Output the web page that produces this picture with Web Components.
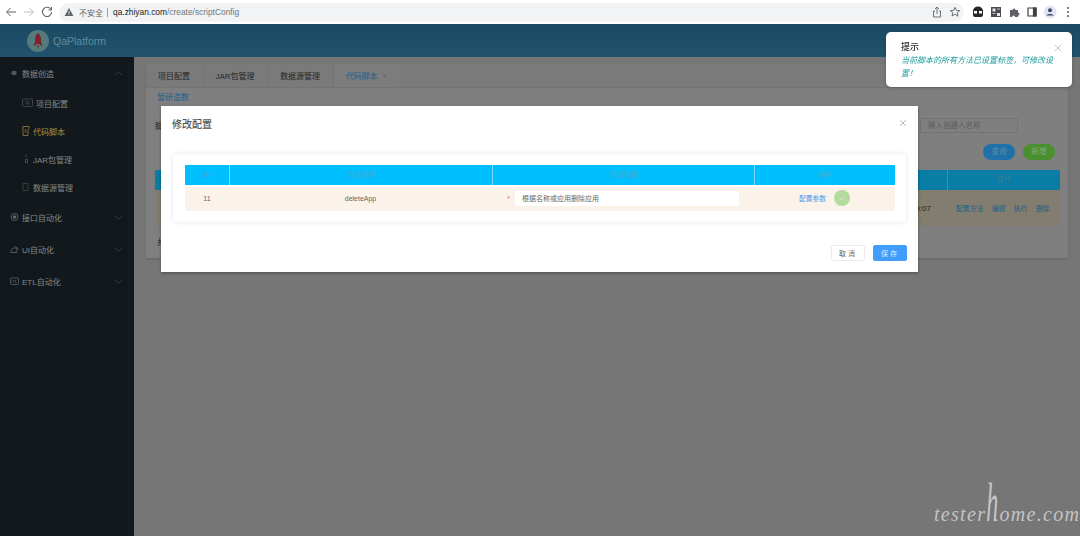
<!DOCTYPE html>
<html lang="zh">
<head>
<meta charset="utf-8">
<title>QaPlatform</title>
<style>
    html, body { margin: 0; height: 100%; }
    body {
        width: 1080px;
        height: 536px;
        position: relative;
        overflow: hidden;
        font-family: "Liberation Sans", "Noto Sans CJK SC", sans-serif;
        background: #777;
        filter: blur(.35px);
    }
    .app {
        display: grid;
        grid-template-columns: 134px 1fr;
        grid-template-rows: 33px 1fr;
        height: 512px;
    }
    app-header { grid-column: 1 / 3; }
</style>
</head>
<body>
<browser-bar></browser-bar>
<div class="app">
    <app-header></app-header>
    <side-menu>
        <menu-group label="数据创造" icon="dot" open></menu-group>
        <menu-item label="项目配置" icon="box" wide></menu-item>
        <menu-item label="代码脚本" icon="file" active></menu-item>
        <menu-item label="JAR包管理" icon="jar"></menu-item>
        <menu-item label="数据源管理" icon="db"></menu-item>
        <menu-group label="接口自动化" icon="api"></menu-group>
        <menu-group label="UI自动化" icon="ui"></menu-group>
        <menu-group label="ETL自动化" icon="etl"></menu-group>
    </side-menu>
    <main-panel></main-panel>
</div>
<config-modal></config-modal>
<toast-note title="提示">当前脚本的所有方法已设置标签，可修改设置！</toast-note>
<water-mark></water-mark>

<script>
const FONT = '"Liberation Sans", "Noto Sans CJK SC", sans-serif';

class BrowserBar extends HTMLElement {
    constructor() {
        super();
        this.shadowDOM = this.attachShadow({mode: "open"});
    }
    connectedCallback() {
        this.shadowDOM.innerHTML = `
        <style>
            :host { display: flex; align-items: center; height: 24px; background: #fff; font-family: ${FONT}; box-sizing: border-box; padding-left: 4px; }
            svg { display: block; flex: none; }
            .nav { display: flex; gap: 4px; }
            .nav svg { width: 14px; height: 14px; }
            .pill { margin-left: 5px; width: 905px; height: 19px; background: #f1f3f4; border-radius: 10px; display: flex; align-items: center; box-sizing: border-box; padding: 0 3px 0 5px; font-size: 8px; color: #5f6368; }
            .warn { margin-right: 5px; }
            .sep { width: 1px; height: 9px; background: #9aa0a6; margin: 0 5px 0 4px; }
            .url { font-size: 8.400px; color: #70757a; }
            .url b { font-weight: 400; color: #202124; }
            .end { margin-left: auto; display: flex; gap: 6px; }
            .ext { margin-left: 7px; display: flex; gap: 4px; align-items: center; }
            .ext svg { width: 14px; height: 14px; }
        </style>
        <div class="nav">
            <svg viewBox="0 0 14 14" fill="none" stroke="#5f6368" stroke-width="1"><path d="M12 7H3M6.500 3L2.500 7l4 4"/></svg>
            <svg viewBox="0 0 14 14" fill="none" stroke="#bdc1c6" stroke-width="1"><path d="M2 7h9M7.500 3l4 4-4 4"/></svg>
            <svg viewBox="0 0 14 14" fill="none" stroke="#5f6368" stroke-width="1.100"><path d="M11 4.600A4.600 4.600 0 1 0 11.600 7"/><path d="M11.400 2v3H8.400" /></svg>
        </div>
        <div class="pill">
            <svg class="warn" width="10" height="10" viewBox="0 0 10 10"><path d="M5 1l4.400 8H.6z" fill="#5f6368"/><path d="M5 4v2.400M5 7.200v.8" stroke="#fff" stroke-width=".8"/></svg>
            <span>不安全</span><span class="sep"></span>
            <span class="url"><b>qa.zhiyan.com</b>/create/scriptConfig</span>
            <span class="end">
                <svg width="12" height="12" viewBox="0 0 12 12" fill="none" stroke="#5f6368" stroke-width=".9"><path d="M4 5H2.500v6h7V5H8M6 8V1.200M4 3l2-2 2 2"/></svg>
                <svg width="12" height="12" viewBox="0 0 12 12" fill="none" stroke="#5f6368" stroke-width=".9"><path d="M6 1.300l1.400 3.100 3.300.3-2.500 2.200.8 3.300L6 8.200l-3 1.800.8-3.300L1.300 4.700l3.300-.3z"/></svg>
            </span>
        </div>
        <div class="ext">
            <svg viewBox="0 0 14 14"><path d="M2 6a5 4.500 0 0 1 10 0v4a2 2 0 0 1-2 2H4a2 2 0 0 1-2-2z" fill="#26282b"/><path d="M3 6h3v2.500H3zM8 6h3v2.500H8z" fill="#fff"/></svg>
            <svg viewBox="0 0 14 14"><path d="M2 2h10v10H2z" fill="#4a4d50"/><path d="M3.500 3.500h3v3h-3zM8 8h3v3H8z" fill="#e8e8e8"/><path d="M3.500 8h3v1h-3zM8 3.500h3v1H8z" fill="#bbb"/></svg>
            <svg viewBox="0 0 14 14"><path d="M3 5h2.500a1.500 1.500 0 0 1 3 0H11v2.400a1.500 1.500 0 0 1 0 3V12H8a1.500 1.500 0 0 0-3 0H3z" fill="#5f6368"/></svg>
            <svg viewBox="0 0 14 14" fill="none" stroke="#3c4043" stroke-width="1.200"><path d="M3 3h8v8H3z"/><path d="M8.500 3h2.500v8H8.500z" fill="#3c4043"/></svg>
            <svg viewBox="0 0 14 14"><circle cx="7" cy="7" r="6.500" fill="#e3e5f3"/><circle cx="7" cy="5.300" r="2" fill="#3c4a66"/><path d="M3.200 10.500c.6-2 6.900-2 7.600 0z" fill="#3c4a66"/></svg>
            <svg viewBox="0 0 14 14" fill="#5f6368"><circle cx="7" cy="3" r="1.100"/><circle cx="7" cy="7" r="1.100"/><circle cx="7" cy="11" r="1.100"/></svg>
        </div>`;
    }
}

class AppHeader extends HTMLElement {
    constructor() {
        super();
        this.shadowDOM = this.attachShadow({mode: "open"});
    }
    connectedCallback() {
        this.shadowDOM.innerHTML = `
        <style>
            :host { display: flex; align-items: center; gap: 4px; background: linear-gradient(#1c4a63, #21536c); padding-left: 27px; font-family: ${FONT}; }
            span { font-size: 10.500px; color: #5f8b9c; }
        </style>
        <svg width="22" height="22" viewBox="0 0 22 22">
            <circle cx="11" cy="11" r="11" fill="#547a7b"/>
            <path d="M11 3c2.800 2 3.400 6 2.800 11H8.200C7.600 9 8.200 5 11 3z" fill="#85202c"/>
            <path d="M8.500 11l-2 5 2.500-1.500zM13.500 11l2 5-2.500-1.500z" fill="#6f1b26"/>
            <path d="M9.800 15h2.400L11 19z" fill="#96262c"/>
        </svg>
        <span>QaPlatform</span>`;
    }
}

class SideMenu extends HTMLElement {
    constructor() {
        super();
        this.shadowDOM = this.attachShadow({mode: "open"});
    }
    connectedCallback() {
        this.shadowDOM.innerHTML = `
        <style>
            :host { display: flex; flex-direction: column; background: #12181b; font-family: ${FONT}; }
        </style>
        <slot></slot>`;
    }
}

const MENU_ICONS = {
    dot: '<rect x="1.500" y="4" width="5" height="4" rx="1" fill="#55585b"/>',
    box: '<rect x=".5" y="2" width="10" height="7.500" rx="1" fill="none" stroke="#55585b" stroke-width=".7"/><circle cx="5.500" cy="5.700" r="1.500" fill="none" stroke="#55585b" stroke-width=".7"/>',
    file: '<path d="M1 1.500h6v2l-1 1v6H1zM2.500 5h2M2.500 7h2" fill="none" stroke="#96843a" stroke-width=".8"/>',
    jar: '<path d="M4 1.500v3M3.500 6.500h2v3h-2z" fill="none" stroke="#55585b" stroke-width=".8"/>',
    db: '<path d="M1 2.500h5v7H1z" fill="none" stroke="#4a4d50" stroke-width=".7"/>',
    api: '<circle cx="4.500" cy="6" r="3.500" fill="none" stroke="#66696c" stroke-width=".8"/><circle cx="4.500" cy="6" r="1.800" fill="#66696c"/>',
    ui: '<path d="M.5 9.500h7M1 9a3.500 3.500 0 0 1 6-3M5 3.500l3 2-2 3" fill="none" stroke="#66696c" stroke-width=".8"/>',
    etl: '<rect x=".5" y="3" width="8" height="6.500" rx="1" fill="none" stroke="#66696c" stroke-width=".7"/><path d="M2 5v2.500M3.300 5.300h1.400M4 5.300v2.200M5.500 5v2.500h1.200" fill="none" stroke="#66696c" stroke-width=".5"/>'
};

class MenuGroup extends HTMLElement {
    constructor() {
        super();
        this.shadowDOM = this.attachShadow({mode: "open"});
    }
    connectedCallback() {
        const chevron = this.hasAttribute("open") ? "M1 5l3.500-3L8 5" : "M1 2l3.500 3L8 2";
        this.shadowDOM.innerHTML = `
        <style>
            :host { display: flex; align-items: center; height: 32px; padding: 0 11px 0 10px; color: #85888a; font-size: 8px; }
            svg.i { width: 12px; height: 12px; flex: none; }
            .label { flex: 1; }
            svg.c { flex: none; }
        </style>
        <svg class="i" viewBox="0 0 12 12">${MENU_ICONS[this.getAttribute("icon")]}</svg>
        <span class="label">${this.getAttribute("label")}</span>
        <svg class="c" width="9" height="7" viewBox="0 0 9 7" fill="none" stroke="#3d4144" stroke-width=".8"><path d="${chevron}"/></svg>`;
    }
}

class MenuItem extends HTMLElement {
    constructor() {
        super();
        this.shadowDOM = this.attachShadow({mode: "open"});
    }
    connectedCallback() {
        this.shadowDOM.innerHTML = `
        <style>
            :host { display: flex; align-items: center; height: 28px; padding-left: 22px; gap: 3px; color: #85888a; font-size: 8px; }
            :host([active]) { color: #a8923e; }
            svg { width: 8px; height: 12px; flex: none; }
            :host([wide]) svg { width: 11px; }
        </style>
        <svg viewBox="0 0 ${this.hasAttribute("wide") ? 11 : 8} 12">${MENU_ICONS[this.getAttribute("icon")]}</svg>
        <span>${this.getAttribute("label")}</span>`;
    }
}

class MainPanel extends HTMLElement {
    constructor() {
        super();
        this.shadowDOM = this.attachShadow({mode: "open"});
    }
    connectedCallback() {
        this.shadowDOM.innerHTML = `
        <style>
            :host { display: block; padding: 7px 12px 0 12px; background: #767676; font-family: ${FONT}; }
            .card { height: 194px; background: #7f7f7f; box-sizing: border-box; box-shadow: 0 1px 2px rgba(0,0,0,.15); color: #262626; font-size: 8px; }
            .tabs { display: flex; height: 24px; background: #7a7a7a; border-bottom: 1px solid #747474; box-sizing: border-box; }
            .tab { display: flex; align-items: center; padding: 0 12.500px 0 12px; border-right: 1px solid #757575; }
            .tab.on { color: #24608e; background: #7c7c7c; height: 23px; gap: 5px; border-right: 0; }
            .tab.on i { font-style: normal; font-size: 7px; color: #5f5f5f; }
            .sub { color: #24608e; padding: 4px 11px 0; height: 11px; line-height: 11px; }
            .query { display: flex; justify-content: space-between; align-items: center; margin-top: 15px; padding: 0 50px 0 9px; height: 15px; }
            .field { width: 98px; height: 15px; box-sizing: border-box; border: 1px solid #737373; border-radius: 2px; color: #5c5c5c; font-size: 7.500px; padding: 2px 7px; line-height: 10px; }
            .btns { display: flex; justify-content: flex-end; gap: 8px; margin-top: 11px; padding-right: 13px; }
            .btns span { width: 32px; height: 16px; line-height: 16px; border-radius: 8px; text-align: center; color: #5f8aa3; font-size: 7.500px; background: #2070aa; }
            .btns span.add { background: #4a9030; color: #83a878; }
            .thead, .trow { display: grid; grid-template-columns: 1fr 113px; margin: 10px 8px 0 9px; }
            .thead { height: 20px; background: #087ea6; }
            .thead span:last-child { border-left: 1px solid #3d94b2; text-align: center; line-height: 20px; color: #3a7f96; font-size: 7.500px; }
            .trow { height: 36px; margin-top: 0; background: #827d6e; align-items: center; }
            .time { text-align: right; padding-right: 16px; }
            .ops { display: flex; gap: 8.500px; padding-left: 9px; color: #24608e; font-size: 6.800px; }
            .total { margin: 10px 11px 0; }
        </style>
        <div class="card">
            <div class="tabs">
                <div class="tab">项目配置</div>
                <div class="tab">JAR包管理</div>
                <div class="tab">数据源管理</div>
                <div class="tab on">代码脚本<i>×</i></div>
            </div>
            <div class="sub">暂研造数</div>
            <div class="query"><span>脚</span><span class="field">输入创建人名称</span></div>
            <div class="btns"><span>查询</span><span class="add">新增</span></div>
            <div class="thead"><span></span><span>操作</span></div>
            <div class="trow">
                <span class="time">09:07</span>
                <span class="ops"><span>配置方法</span><span>编辑</span><span>执行</span><span>删除</span></span>
            </div>
            <div class="total">共 1 条</div>
        </div>`;
    }
}

class ConfigModal extends HTMLElement {
    constructor() {
        super();
        this.shadowDOM = this.attachShadow({mode: "open"});
    }
    connectedCallback() {
        this.shadowDOM.innerHTML = `
        <style>
            :host { position: absolute; left: 161px; top: 106px; width: 757px; height: 166px; background: #fff; box-shadow: 0 1px 3px rgba(0,0,0,.35); display: flex; flex-direction: column; font-family: ${FONT}; color: #666; font-size: 7px; }
            .head { display: flex; justify-content: space-between; align-items: center; height: 34px; padding: 0 11px; flex: none; margin-bottom: 14px; }
            .head h2 { margin: 0; font-size: 10px; font-weight: 500; color: #555; }
            .box { margin: 0 12px; padding: 11px 11px 11px 12px; height: 68px; box-sizing: border-box; border-radius: 3px; box-shadow: 0 0 5px rgba(0,0,0,.1); }
            .grid { display: grid; grid-template-columns: 44px 263px 262px 141px; }
            .th { height: 20px; line-height: 20px; background: #00bfff; color: #55a6c6; text-align: center; border-left: 1px solid #7adfff; box-sizing: border-box; }
            .th:first-child { border-left: 0; }
            .td { height: 24px; box-sizing: border-box; padding-bottom: 2px; margin-top: 2px; background: #fbf3e9; display: flex; align-items: center; justify-content: center; }
            .star { color: #f56c6c; font-size: 8px; margin-right: 5px; }
            .input { width: 224px; height: 15px; line-height: 15px; background: #fff; border-radius: 2px; box-sizing: border-box; padding-left: 7px; }
            .link { color: #3b99f0; font-size: 6.800px; }
            .ok { width: 16px; height: 16px; margin-left: 8px; border-radius: 50%; background: #b3db9b; display: flex; align-items: center; justify-content: center; }
            .foot { display: flex; justify-content: flex-end; gap: 8px; padding: 23px 11px 0 0; }
            .foot span { width: 34px; height: 16px; line-height: 15px; box-sizing: border-box; text-align: center; border-radius: 2px; letter-spacing: 2px; font-size: 7px; border: 1px solid #ececec; }
            .foot .save { background: #409eff; border-color: #409eff; color: #dcecff; }
        </style>
        <div class="head">
            <h2>修改配置</h2>
            <svg width="8" height="8" viewBox="0 0 8 8" stroke="#a8a8a8" stroke-width=".8"><path d="M1 1l6 6M7 1L1 7"/></svg>
        </div>
        <div class="box">
            <div class="grid">
                <div class="th">ID</div><div class="th">方法名称</div><div class="th">方法标题</div><div class="th">操作</div>
                <div class="td">11</div>
                <div class="td">deleteApp</div>
                <div class="td"><span class="star">*</span><span class="input">根据名称或应用删除应用</span></div>
                <div class="td">
                    <span class="link">配置参数</span>
                    <span class="ok"><svg width="8" height="8" viewBox="0 0 8 8" fill="none" stroke="#d6eccb" stroke-width=".8"><path d="M1.500 4l2 2 3-3.500"/></svg></span>
                </div>
            </div>
        </div>
        <div class="foot"><span>取消</span><span class="save">保存</span></div>`;
    }
}

class ToastNote extends HTMLElement {
    constructor() {
        super();
        this.shadowDOM = this.attachShadow({mode: "open"});
    }
    connectedCallback() {
        this.shadowDOM.innerHTML = `
        <style>
            :host { position: absolute; left: 886px; top: 32px; width: 186px; height: 55px; box-sizing: border-box; padding: 8px 15px 0; background: #fff; border-radius: 5px; font-family: ${FONT}; box-shadow: 0 1px 4px rgba(0,0,0,.2); }
            .title { display: flex; justify-content: space-between; align-items: center; height: 13px; font-size: 9px; font-weight: 500; color: #303133; }
            svg { margin-top: 3px; margin-right: -5px; }
            p { margin: 1px 0 0; font-size: 8px; line-height: 13px; font-style: italic; color: #1d9a9a; }
        </style>
        <div class="title"><span>${this.getAttribute("title")}</span>
            <svg width="8" height="8" viewBox="0 0 8 8" stroke="#b4b6ba" stroke-width=".8"><path d="M1 1l6 6M7 1L1 7"/></svg>
        </div>
        <p><slot></slot></p>`;
    }
}

class WaterMark extends HTMLElement {
    constructor() {
        super();
        this.shadowDOM = this.attachShadow({mode: "open"});
    }
    connectedCallback() {
        this.shadowDOM.innerHTML = `
        <style>
            :host { position: absolute; left: 934px; top: 501px; font-family: "Liberation Serif", serif; font-style: italic; font-size: 20px; color: #c4c4c4; letter-spacing: 1.300px; line-height: 24px; white-space: nowrap; }
            b { display: inline-block; font-weight: 400; font-size: 24px; line-height: 1; transform: scale(1, 2.300); transform-origin: 50% 84%; }
        </style>
        <span>tester<b>h</b>ome.com</span>`;
    }
}

customElements.define("browser-bar", BrowserBar);
customElements.define("app-header", AppHeader);
customElements.define("side-menu", SideMenu);
customElements.define("menu-group", MenuGroup);
customElements.define("menu-item", MenuItem);
customElements.define("main-panel", MainPanel);
customElements.define("config-modal", ConfigModal);
customElements.define("toast-note", ToastNote);
customElements.define("water-mark", WaterMark);
</script>
</body>
</html>
